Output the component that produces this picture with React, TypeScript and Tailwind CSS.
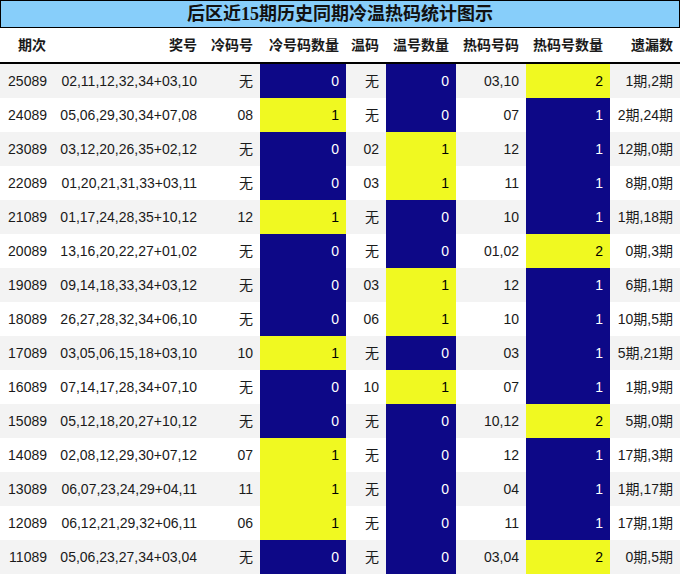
const ROWS: string[][] = [
  ['25089', '02,11,12,32,34+03,10', '无', '0', '无', '0', '03,10', '2', '1期,2期'],
  ['24089', '05,06,29,30,34+07,08', '08', '1', '无', '0', '07', '1', '2期,24期'],
  ['23089', '03,12,20,26,35+02,12', '无', '0', '02', '1', '12', '1', '12期,0期'],
  ['22089', '01,20,21,31,33+03,11', '无', '0', '03', '1', '11', '1', '8期,0期'],
  ['21089', '01,17,24,28,35+10,12', '12', '1', '无', '0', '10', '1', '1期,18期'],
  ['20089', '13,16,20,22,27+01,02', '无', '0', '无', '0', '01,02', '2', '0期,3期'],
  ['19089', '09,14,18,33,34+03,12', '无', '0', '03', '1', '12', '1', '6期,1期'],
  ['18089', '26,27,28,32,34+06,10', '无', '0', '06', '1', '10', '1', '10期,5期'],
  ['17089', '03,05,06,15,18+03,10', '10', '1', '无', '0', '03', '1', '5期,21期'],
  ['16089', '07,14,17,28,34+07,10', '无', '0', '10', '1', '07', '1', '1期,9期'],
  ['15089', '05,12,18,20,27+10,12', '无', '0', '无', '0', '10,12', '2', '5期,0期'],
  ['14089', '02,08,12,29,30+07,12', '07', '1', '无', '0', '12', '1', '17期,3期'],
  ['13089', '06,07,23,24,29+04,11', '11', '1', '无', '0', '04', '1', '1期,17期'],
  ['12089', '06,12,21,29,32+06,11', '06', '1', '无', '0', '11', '1', '17期,1期'],
  ['11089', '05,06,23,27,34+03,04', '无', '0', '无', '0', '03,04', '2', '0期,5期'],
];

const HEADERS = ['期次', '奖号', '冷码号', '冷号码数量', '温码', '温号数量', '热码号码', '热码号数量', '遗漏数'];
const WIDTHS = ['w-[54px]', 'w-[150px]', 'w-[56px]', 'w-[86px]', 'w-[40px]', 'w-[70px]', 'w-[70px]', 'w-[84px]', 'w-[70px]'];

// heat cells: which value maps to the "high" (yellow) end per column
const HIGH: Record<number, string> = { 3: '1', 5: '1', 7: '2' };

const FONT = "font-['Liberation_Sans','Noto_Sans_CJK_SC',sans-serif]";

function cellClass(col: number, value: string) {
  if (col in HIGH) {
    return value === HIGH[col] ? 'bg-[#f0f921] text-black' : 'bg-[#0d0887] text-white';
  }
  return 'text-[#1a1a1a]';
}

export default function App() {
  return (
    <div className={`w-[680px] h-[575px] bg-white ${FONT}`}>
      <div className="h-[28px] border border-black bg-[#87cefa] flex items-center justify-center">
        <h1 className="text-[18px] font-bold text-[#111] font-['Liberation_Serif','Noto_Sans_CJK_SC',serif] leading-none">
          后区近15期历史同期冷温热码统计图示
        </h1>
      </div>

      <div className="flex h-[36px] border-b-2 border-black">
        {HEADERS.map((h, i) => (
          <div
            key={h}
            className={`${WIDTHS[i]} flex items-center justify-end pr-[7px] text-[14px] font-bold text-[#1a1a1a] ${i === 0 ? 'pr-[8px]' : ''}`}
          >
            {h}
          </div>
        ))}
      </div>

      {ROWS.map((row, r) => (
        <div key={row[0]} className={`flex h-[34px] ${r % 2 === 0 ? 'bg-[#f3f3f3]' : 'bg-white'}`}>
          {row.map((v, c) => (
            <div
              key={c}
              className={`${WIDTHS[c]} flex items-center justify-end pr-[7px] text-[14px] ${cellClass(c, v)}`}
            >
              {v}
            </div>
          ))}
        </div>
      ))}
    </div>
  );
}
